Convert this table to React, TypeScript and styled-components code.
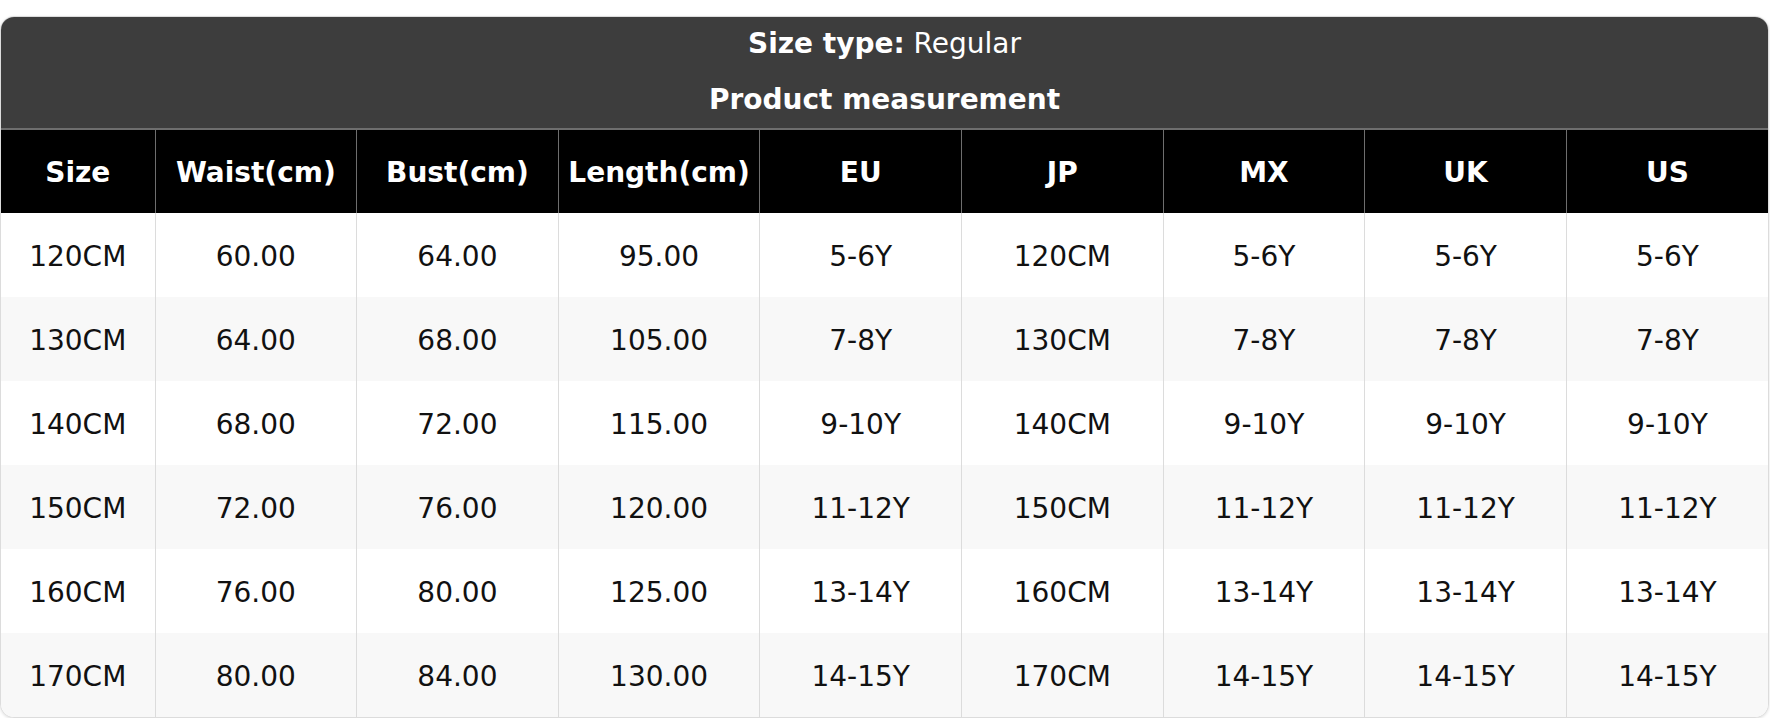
import styled, { createGlobalStyle } from "styled-components";

const GlobalStyle = createGlobalStyle`
  * { box-sizing: border-box; }
  body {
    margin: 0;
    background: #fff;
    font-family: "DejaVu Sans", "Liberation Sans", sans-serif;
  }
`;

const Page = styled.div`
  padding-top: 16px;
  width: 1770px;
`;

const Card = styled.div`
  width: 1769px;
  border: 1px solid #dcdcdc;
  border-radius: 14px;
  overflow: hidden;
  box-shadow: 0 1px 3px rgba(0, 0, 0, 0.12);
  background: #fff;
`;

const Title = styled.div`
  background: #3d3d3d;
  color: #fff;
  text-align: center;
  font-size: 28px;
`;

const TitleLine = styled.div<{ $h: number }>`
  height: ${({ $h }) => $h}px;
  line-height: ${({ $h }) => $h}px;
  font-weight: 400;

  b {
    font-weight: 700;
  }
`;

const Table = styled.table`
  width: 100%;
  border-collapse: collapse;
  table-layout: fixed;
  font-size: 28px;
`;

const HeadRow = styled.tr`
  background: #000;
  border-top: 2px solid #6e6e6e;
`;

const HeadCell = styled.th`
  height: 84px;
  padding: 1px 0 0;
  color: #fff;
  font-weight: 700;
  text-align: center;
  vertical-align: middle;
  border-left: 1px solid #6e6e6e;

  &:first-child {
    border-left: none;
  }
`;

const Row = styled.tr<{ $alt: boolean }>`
  background: ${({ $alt }) => ($alt ? "#f8f8f8" : "#fff")};
`;

const Cell = styled.td`
  height: 84px;
  padding: 2px 0 0;
  color: #111;
  text-align: center;
  vertical-align: middle;
  border-left: 1px solid #dcdcdc;

  &:first-child {
    border-left: none;
  }
`;

const columns = ["Size", "Waist(cm)", "Bust(cm)", "Length(cm)", "EU", "JP", "MX", "UK", "US"];

const rows = [
  ["120CM", "60.00", "64.00", "95.00", "5-6Y", "120CM", "5-6Y", "5-6Y", "5-6Y"],
  ["130CM", "64.00", "68.00", "105.00", "7-8Y", "130CM", "7-8Y", "7-8Y", "7-8Y"],
  ["140CM", "68.00", "72.00", "115.00", "9-10Y", "140CM", "9-10Y", "9-10Y", "9-10Y"],
  ["150CM", "72.00", "76.00", "120.00", "11-12Y", "150CM", "11-12Y", "11-12Y", "11-12Y"],
  ["160CM", "76.00", "80.00", "125.00", "13-14Y", "160CM", "13-14Y", "13-14Y", "13-14Y"],
  ["170CM", "80.00", "84.00", "130.00", "14-15Y", "170CM", "14-15Y", "14-15Y", "14-15Y"],
];

export default function App() {
  return (
    <Page>
      <GlobalStyle />
      <Card>
        <Title>
          <TitleLine $h={54}>
            <b>Size type:</b> Regular
          </TitleLine>
          <TitleLine $h={57}>
            <b>Product measurement</b>
          </TitleLine>
        </Title>
        <Table>
          <colgroup>
            <col style={{ width: 154 }} />
            {columns.slice(1).map((c) => (
              <col key={c} />
            ))}
          </colgroup>
          <thead>
            <HeadRow>
              {columns.map((c) => (
                <HeadCell key={c}>{c}</HeadCell>
              ))}
            </HeadRow>
          </thead>
          <tbody>
            {rows.map((r, i) => (
              <Row key={r[0]} $alt={i % 2 === 1}>
                {r.map((v, j) => (
                  <Cell key={j}>{v}</Cell>
                ))}
              </Row>
            ))}
          </tbody>
        </Table>
      </Card>
    </Page>
  );
}
